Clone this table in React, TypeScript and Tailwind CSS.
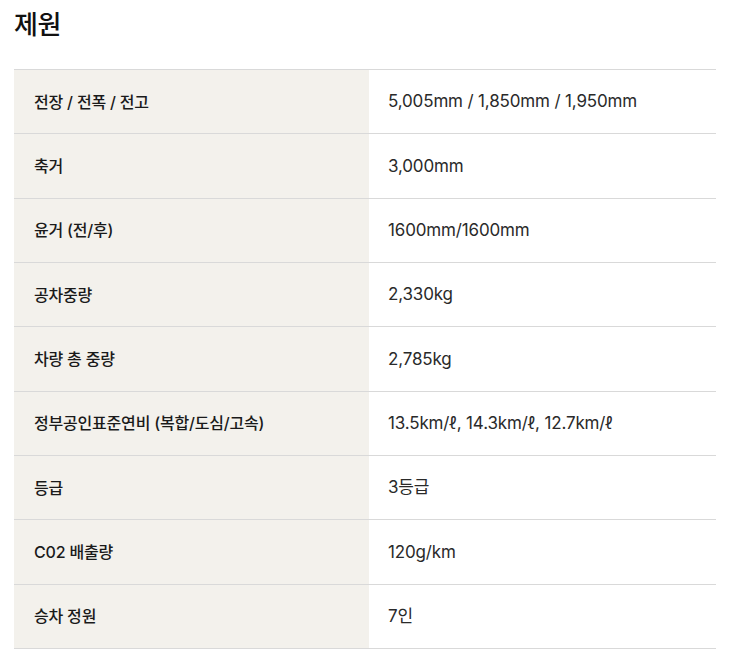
const SPECS: { label: string; value: string }[] = [
  { label: '전장 / 전폭 / 전고', value: '5,005mm / 1,850mm / 1,950mm' },
  { label: '축거', value: '3,000mm' },
  { label: '윤거 (전/후)', value: '1600mm/1600mm' },
  { label: '공차중량', value: '2,330kg' },
  { label: '차량 총 중량', value: '2,785kg' },
  { label: '정부공인표준연비 (복합/도심/고속)', value: '13.5km/ℓ, 14.3km/ℓ, 12.7km/ℓ' },
  { label: '등급', value: '3등급' },
  { label: 'C02 배출량', value: '120g/km' },
  { label: '승차 정원', value: '7인' },
]

export default function App() {
  return (
    <div
      className="bg-white w-[729px] h-[670px] pl-[14px] pt-[6px]"
      style={{ fontFamily: 'Inter, "Noto Sans CJK KR", sans-serif' }}
    >
      <h2 className="text-[26px] leading-[38px] font-medium text-[#111] tracking-[-0.5px]">제원</h2>
      <div className="mt-[25px] w-[702px] border-t border-[#d9d9d9]">
        {SPECS.map(s => (
          <div key={s.label} className="flex h-[64.33px] border-b border-[#d9d9d9]">
            <div className="w-[355px] shrink-0 bg-[#f3f1ec] flex items-center pl-[20px] text-[16px] font-medium text-[#1a1a1a] tracking-[-0.2px]">
              {s.label}
            </div>
            <div className="flex-1 flex items-center pl-[19px] pt-[1px] text-[17px] font-normal text-[#2a2a2a] tracking-[-0.15px]">
              {s.value}
            </div>
          </div>
        ))}
      </div>
    </div>
  )
}
